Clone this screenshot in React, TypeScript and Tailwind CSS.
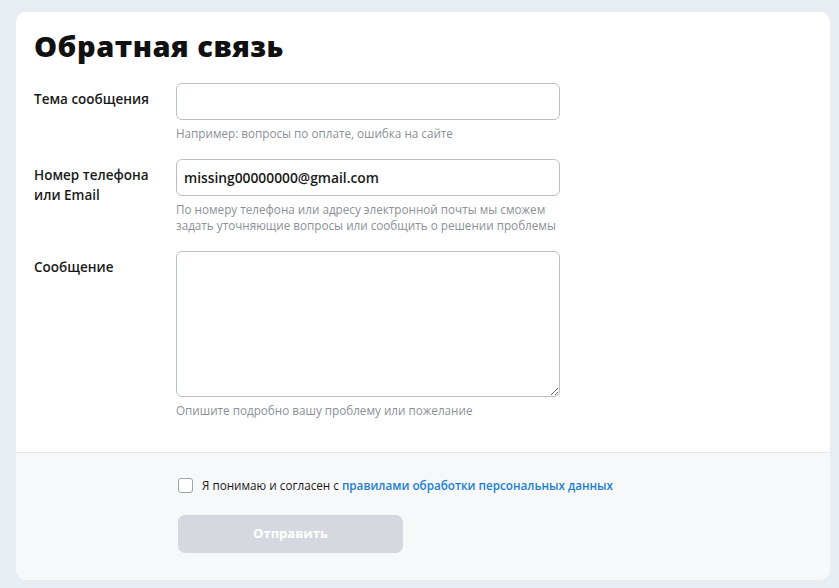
export default function App() {
  return (
    <div
      className="min-h-[588px] bg-[#e8ecf3] px-4 py-3"
      style={{ fontFamily: '"Open Sans", "Noto Sans", sans-serif' }}
    >
      <div className="w-[814px] overflow-hidden rounded-[10px] bg-white">
        <div className="px-[18px] pt-[17px] pb-[34px]">
          <h1 className="text-[29px] leading-[34px] font-black tracking-[0.5px] text-[#111]">
            Обратная связь
          </h1>

          <div className="mt-[20px] flex">
            <label className="w-[142px] shrink-0 pt-[6px] text-[13.5px] leading-5 font-semibold text-[#1a1a1a]">
              Тема сообщения
            </label>
            <div className="w-[384px]">
              <input
                type="text"
                className="h-[37px] w-full rounded-[6px] border border-[#b9bdc4] px-[7px] outline-none"
              />
              <p className="mt-[5px] text-[11.7px] leading-4 text-[#8b9097]">
                Например: вопросы по оплате, ошибка на сайте
              </p>
            </div>
          </div>

          <div className="mt-[18px] flex">
            <label className="w-[142px] shrink-0 pt-[6px] text-[13.5px] leading-5 font-semibold text-[#1a1a1a]">
              Номер телефона
              <br />
              или Email
            </label>
            <div className="w-[384px]">
              <input
                type="text"
                defaultValue="missing00000000@gmail.com"
                className="h-[37px] w-full rounded-[6px] border border-[#b9bdc4] px-[7px] text-[13.8px] font-semibold text-[#1a1a1a] outline-none"
              />
              <p className="mt-[5px] text-[11.7px] leading-4 text-[#8b9097]">
                По номеру телефона или адресу электронной почты мы сможем задать
                уточняющие вопросы или сообщить о решении проблемы
              </p>
            </div>
          </div>

          <div className="mt-[18px] flex">
            <label className="w-[142px] shrink-0 pt-[6px] text-[13.5px] leading-5 font-semibold text-[#1a1a1a]">
              Сообщение
            </label>
            <div className="w-[384px]">
              <textarea className="block h-[146px] w-full rounded-[6px] border border-[#b9bdc4] px-2 py-1 outline-none" />
              <p className="mt-[5px] text-[11.7px] leading-4 text-[#8b9097]">
                Опишите подробно вашу проблему или пожелание
              </p>
            </div>
          </div>
        </div>

        <div className="border-t border-[#e6e9ee] bg-[#f7f8fa] pl-[162px] pt-[24px] pb-[27px]">
          <label className="flex items-center gap-[9px] text-[11.7px] text-[#1a1a1a]">
            <span className="block h-[15px] w-[15px] rounded-[3px] border border-[#9da2a9] bg-white" />
            <span>
              Я понимаю и согласен с{' '}
              <a className="font-semibold text-[#1b7fd4]">
                правилами обработки персональных данных
              </a>
            </span>
          </label>
          <button
            type="button"
            className="mt-[20px] h-[38px] w-[225px] rounded-[7px] bg-[#d5d9df] text-[13px] font-bold text-white"
          >
            Отправить
          </button>
        </div>
      </div>
    </div>
  );
}
